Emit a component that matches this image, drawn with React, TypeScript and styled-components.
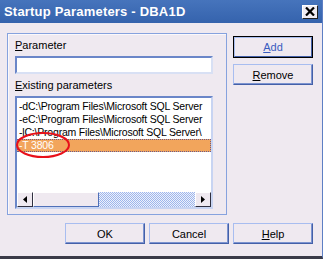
import styled, { createGlobalStyle } from 'styled-components'

const GlobalStyle = createGlobalStyle`
  * { box-sizing: border-box; }
  html, body { margin: 0; padding: 0; }
  body {
    width: 323px;
    height: 259px;
    overflow: hidden;
    font-family: "Liberation Sans", Arial, sans-serif;
    font-size: 11px;
    color: #000;
  }
`

const params = [
  '-dC:\\Program Files\\Microsoft SQL Server',
  '-eC:\\Program Files\\Microsoft SQL Server',
  '-lC:\\Program Files\\Microsoft SQL Server\\',
  '-T 3806',
]

const App = () => {
  return (
    <>
      <GlobalStyle />
      <Window>
        <TitleBar>
          <Title>Startup Parameters - DBA1D</Title>
          <CloseButton>
            <svg width="10" height="9" viewBox="0 0 10 9">
              <path d="M1 0.5 L9 8.5 M9 0.5 L1 8.5" stroke="#000" strokeWidth="2.2" />
            </svg>
          </CloseButton>
        </TitleBar>
        <Body>
          <Main>
            <GroupBox>
              <Label>
                <u>P</u>arameter
              </Label>
              <TextBox />
              <Label>
                <u>E</u>xisting parameters
              </Label>
              <ListBox>
                <Items>
                  {params.map((p, i) => (
                    <Item key={p} selected={i === params.length - 1}>
                      {p}
                    </Item>
                  ))}
                </Items>
                <ScrollBar>
                  <ArrowButton>
                    <svg width="4" height="7" viewBox="0 0 4 7">
                      <path d="M4 0 L0 3.5 L4 7 Z" fill="#000" />
                    </svg>
                  </ArrowButton>
                  <Track>
                    <Thumb />
                  </Track>
                  <ArrowButton>
                    <svg width="4" height="7" viewBox="0 0 4 7">
                      <path d="M0 0 L4 3.5 L0 7 Z" fill="#000" />
                    </svg>
                  </ArrowButton>
                </ScrollBar>
                <Circle width="56" height="28" viewBox="0 0 56 28">
                  <ellipse cx="28" cy="14" rx="26" ry="12" fill="none" stroke="#e8101a" strokeWidth="2" />
                </Circle>
              </ListBox>
            </GroupBox>
            <SideButtons>
              <Button isDefault accent>
                <u>A</u>dd
              </Button>
              <Button>
                <u>R</u>emove
              </Button>
            </SideButtons>
          </Main>
          <Footer>
            <Button>OK</Button>
            <Button>Cancel</Button>
            <Button>
              <u>H</u>elp
            </Button>
          </Footer>
        </Body>
      </Window>
    </>
  )
}

export default App

const Window = styled.div`
  width: 323px;
  height: 259px;
  background-color: #efe9f0;
  border-right: 1px solid #5d7fc4;
  border-bottom: 3px solid #3a3a48;
  display: flex;
  flex-direction: column;
`

const TitleBar = styled.div`
  height: 23px;
  background: linear-gradient(#4674bc, #3563ad);
  display: flex;
  align-items: center;
  justify-content: space-between;
  padding: 0 4px 0 4px;
`

const Title = styled.span`
  color: #fff;
  font-weight: bold;
  font-size: 13px;
  letter-spacing: 0.2px;
`

const CloseButton = styled.div`
  width: 16px;
  height: 14px;
  background: #f0ecf2;
  border: 1px solid;
  border-color: #fff #202020 #202020 #fff;
  display: flex;
  align-items: center;
  justify-content: center;
`

const Body = styled.div`
  flex: 1;
  display: flex;
  flex-direction: column;
  padding: 10px 9px 0 7px;
`

const Main = styled.div`
  display: flex;
  gap: 6px;
`

const GroupBox = styled.div`
  width: 220px;
  height: 182px;
  border: 1px solid #86a2de;
  box-shadow: inset 1px 1px 0 #fbf8fb;
  padding: 5px 13px 0 7px;
  display: flex;
  flex-direction: column;
`

const Label = styled.div`
  height: 13px;
  line-height: 13px;
  margin-bottom: 4px;
  white-space: nowrap;
`

const TextBox = styled.div`
  width: 198px;
  height: 18px;
  background: #fff;
  border: 2px solid;
  border-color: #6a86c8 #d8e0f4 #d8e0f4 #6a86c8;
  margin-bottom: 5px;
`

const ListBox = styled.div`
  position: relative;
  width: 198px;
  height: 113px;
  background: #fff;
  border: 2px solid;
  border-color: #6a86c8 #c8d4f2 #c8d4f2 #6a86c8;
  display: flex;
  flex-direction: column;
`

const Items = styled.div`
  flex: 1;
  overflow: hidden;
  padding-top: 2px;
`

const Item = styled.div<{ selected?: boolean }>`
  height: 13px;
  line-height: 13px;
  padding-left: 2px;
  white-space: nowrap;
  font-size: 10.5px;
  letter-spacing: -0.2px;
  color: ${(p) => (p.selected ? '#fff' : '#000')};
  background: ${(p) => (p.selected ? '#f2a55c' : 'transparent')};
  outline: ${(p) => (p.selected ? '1px dotted #6a5a8a' : 'none')};
  outline-offset: -1px;
`

const ScrollBar = styled.div`
  height: 15px;
  display: flex;
`

const ArrowButton = styled.div`
  width: 16px;
  height: 15px;
  background: #efe9f0;
  border: 1px solid;
  border-color: #fff #303040 #303040 #fff;
  display: flex;
  align-items: center;
  justify-content: center;
`

const Track = styled.div`
  flex: 1;
  background: repeating-conic-gradient(#9db6ec 0 25%, #eef1fb 0 50%) 0 0 / 2px 2px;
`

const Thumb = styled.div`
  width: 66px;
  height: 15px;
  background: #efe9f0;
  border: 1px solid;
  border-color: #fff #5070b8 #5070b8 #fff;
`

const Circle = styled.svg`
  position: absolute;
  left: -2px;
  top: 33px;
`

const SideButtons = styled.div`
  display: flex;
  flex-direction: column;
  gap: 7px;
  padding-top: 3px;
`

const Button = styled.div<{ isDefault?: boolean; accent?: boolean }>`
  width: 80px;
  height: 21px;
  display: flex;
  align-items: center;
  justify-content: center;
  font-size: 11px;
  color: ${(p) => (p.accent ? '#3a5cc0' : '#000')};
  background: #efe9f0;
  border: 1px solid;
  border-color: #a8bdf0 #4460a8 #4460a8 #a8bdf0;
  box-shadow: ${(p) => (p.isDefault ? '0 0 0 1px #000' : 'inset -1px -1px 0 #7d94d0')};
  ${(p) => (p.isDefault ? 'width: 78px; margin: 1px 0 0 1px; height: 20px;' : '')}
`

const Footer = styled.div`
  display: flex;
  justify-content: flex-end;
  gap: 4px;
  margin-top: 8px;
`
